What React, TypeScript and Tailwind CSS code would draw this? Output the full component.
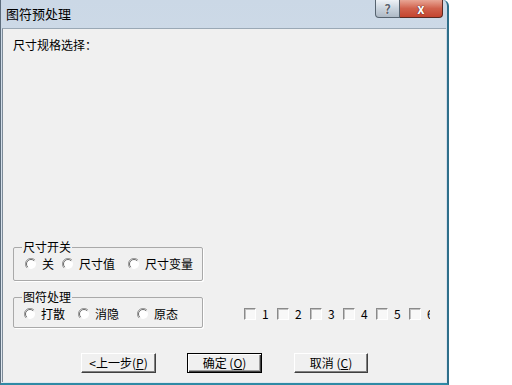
import React from "react";

const font = { fontFamily: '"Noto Sans CJK SC", "Liberation Sans", sans-serif' };

const sizeSwitch = [
  { label: "关", w: "w-[37px]" },
  { label: "尺寸值", w: "w-[66px]" },
  { label: "尺寸变量", w: "w-[66px]" },
];

const symbolMode = [
  { label: "打散", w: "w-[54px]" },
  { label: "消隐", w: "w-[59px]" },
  { label: "原态", w: "w-[50px]" },
];

const Radio = () => (
  <svg width="12" height="12" viewBox="0 0 12 12" className="shrink-0">
    <circle cx="6" cy="6" r="5" fill="#ffffff" />
    <path d="M10 2 A5.6 5.6 0 0 0 2 10" fill="none" stroke="#9a9a9a" strokeWidth="1" />
    <path d="M9.2 2.8 A4.5 4.5 0 0 0 2.8 9.2" fill="none" stroke="#6a6a6a" strokeWidth="1" />
  </svg>
);

const GroupBox = ({
  title,
  items,
  pad,
  h,
}: {
  title: string;
  items: { label: string; w: string }[];
  pad: string;
  h: string;
}) => (
  <fieldset className={`w-[190px] ${h} border border-[#a9a9a9] rounded-[2px] shadow-[1px_1px_0_#ffffff]`}>
    <legend className="ml-[8px] px-[1px] text-[12px] leading-[16px] text-black">{title}</legend>
    <div className={`flex items-center h-[16px] mt-[1px] ${pad}`}>
      {items.map((it) => (
        <div key={it.label} className={`flex items-center gap-[5px] ${it.w}`}>
          <Radio />
          <span className="text-[12px] leading-[16px] text-black whitespace-nowrap">{it.label}</span>
        </div>
      ))}
    </div>
  </fieldset>
);

const btnBase =
  "h-[20px] flex items-center justify-center text-[12px] leading-[16px] text-black bg-[#f0f0f0]";
const btnNormal =
  "border border-t-white border-l-white border-r-[#404040] border-b-[#404040] shadow-[inset_-1px_-1px_0_#808080]";
const btnDefault =
  "border border-black shadow-[inset_1px_1px_0_#ffffff,inset_-1px_-1px_0_#404040,inset_-2px_-2px_0_#a0a0a0]";

export default function App() {
  return (
    <div className="w-[512px] h-[385px] bg-white flex" style={font}>
      <div className="w-[449px] h-[385px] flex flex-col bg-gradient-to-b from-[#cbd8e6] to-[#dfe7ef] border-l border-l-[#5d6d7c] border-r-2 border-r-[#2f6f8a] border-b-2 border-b-[#2f8aa5] rounded-tr-[6px]">
        {/* title bar */}
        <div className="h-[28px] flex items-start justify-between">
          <div className="pl-[5px] pt-[5px] text-[13px] leading-[18px] text-black">图符预处理</div>
          <div className="flex mr-[4px]">
            <div className="w-[25px] h-[18px] flex items-center justify-center border border-[#56636f] border-t-0 rounded-bl-[4px] bg-gradient-to-b from-[#eef2f6] via-[#c9d3dd] to-[#aeb9c5]">
              <span className="text-[13px] font-bold leading-none text-[#5b6570] [text-shadow:0_0_1px_#ffffff,0_0_1px_#ffffff]">?</span>
            </div>
            <div className="w-[43px] h-[18px] flex items-center justify-center border border-[#5a2a22] border-t-0 border-l-0 rounded-br-[4px] bg-gradient-to-b from-[#e8a595] via-[#d0614c] to-[#c4442e]">
              <span className="text-[13px] font-bold leading-none text-white [text-shadow:0_0_1px_#5a1a10,0_0_1px_#5a1a10]">x</span>
            </div>
          </div>
        </div>

        {/* client area */}
        <div className="flex-1 ml-[1px] mr-[1px] mb-[1px] bg-[#f0f0f0] border-l border-l-[#7d8b98] border-t border-t-[#9aa8b5] flex flex-col pl-[10px]">
          <div className="mt-[8px] h-[16px] text-[12px] leading-[16px] text-black">尺寸规格选择：</div>

          <div className="mt-[186px]">
            <GroupBox title="尺寸开关" items={sizeSwitch} pad="pl-[11px]" h="h-[42px]" />
          </div>

          <div className="mt-[8px] flex items-start">
            <GroupBox title="图符处理" items={symbolMode} pad="pl-[10px]" h="h-[39px]" />
            <div className="ml-[41px] mt-[17px] w-[186px] overflow-hidden flex">
              {[1, 2, 3, 4, 5, 6].map((n) => (
                <div key={n} className="w-[33px] shrink-0 flex items-center gap-[6px]">
                  <div className="w-[12px] h-[12px] bg-[#f8f8f8] border border-t-[#8a8a8a] border-l-[#8a8a8a] border-r-white border-b-white shadow-[inset_1px_1px_0_#c0c0c0]" />
                  <span className="text-[12px] leading-[16px] text-black">{n}</span>
                </div>
              ))}
            </div>
          </div>

          <div className="mt-[25px] flex ml-[68px]">
            <div className={`${btnBase} ${btnNormal} w-[75px]`}>
              &lt;上一步(<u>P</u>)
            </div>
            <div className={`${btnBase} ${btnDefault} w-[75px] ml-[31px]`}>
              确定 (<u>O</u>)
            </div>
            <div className={`${btnBase} ${btnNormal} w-[74px] ml-[32px]`}>
              取消 (<u>C</u>)
            </div>
          </div>
        </div>
      </div>
    </div>
  );
}
